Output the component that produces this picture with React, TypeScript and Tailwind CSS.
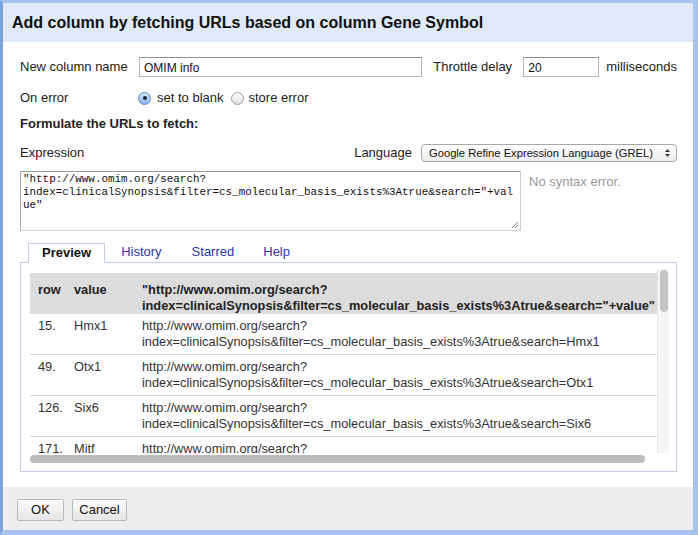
import React from "react";

const URL_TAIL = "index=clinicalSynopsis&filter=cs_molecular_basis_exists%3Atrue&search=";

function Radio({ checked, className = "" }: { checked: boolean; className?: string }) {
  return checked ? (
    <span className={"w-[13px] h-[13px] rounded-full border border-[#5a86c4] bg-gradient-to-b from-[#d6e7fc] to-[#8ab6ec] flex items-center justify-center shrink-0 " + className}>
      <span className="w-[4px] h-[4px] rounded-full bg-[#1d2a40]" />
    </span>
  ) : (
    <span className={"block w-[13px] h-[13px] rounded-full border border-[#a0a0a0] bg-gradient-to-b from-[#ffffff] to-[#dedede] shrink-0 " + className} />
  );
}

function Row({ n, v }: { n: string; v: string }) {
  return (
    <div className="flex items-start h-[41px] pt-[4px] border-b border-[#d6d6d6] text-[#333]">
      <div className="w-[36px] pl-[8px] shrink-0">{n}</div>
      <div className="w-[68px] pl-[8px] shrink-0">{v}</div>
      <div className="pl-[8px] whitespace-nowrap">
        <div>http://www.omim.org/search?</div>
        <div>{URL_TAIL + v}</div>
      </div>
    </div>
  );
}

export default function App() {
  return (
    <div className="w-[698px] h-[535px] border-l-[3px] border-l-[#7ea2d9] border-t-[3px] border-t-[#a9c4ec] border-r-[5px] border-r-[#a9c4ec] border-b-[5px] border-b-[#a9c4ec] font-['Liberation_Sans',Arial,sans-serif] text-[13px] text-[#222] overflow-hidden">
      <div className="flex flex-col h-full">
        <div className="h-[39px] shrink-0 bg-[#dfe9f8] flex items-center pl-[9px] text-[16px] font-bold text-[#111]">
          Add column by fetching URLs based on column Gene Symbol
        </div>

        <div className="flex-1 bg-white pl-[17px] pr-[16px] flex flex-col">
          {/* Row 1 */}
          <div className="mt-[15px] h-[20px] flex items-center">
            <div className="w-[119px] shrink-0">New column name</div>
            <div className="w-[284px] h-[20px] border border-[#b5b5b5] border-t-[#8f8f8f] flex items-center pl-[4px] pt-[1px] text-[12px] text-[#111]">
              OMIM info
            </div>
            <div className="ml-[11px] w-[90px] shrink-0">Throttle delay</div>
            <div className="w-[76px] h-[20px] border border-[#b5b5b5] border-t-[#8f8f8f] flex items-center pl-[4px] pt-[1px] text-[12px] text-[#111]">
              20
            </div>
            <div className="ml-[7px]">milliseconds</div>
          </div>

          {/* Row 2 */}
          <div className="mt-[11px] h-[20px] flex items-center">
            <div className="w-[118px] shrink-0">On error</div>
            <Radio checked />
            <span className="ml-[6px]">set to blank</span>
            <Radio checked={false} className="ml-[7px]" />
            <span className="ml-[5px]">store error</span>
          </div>

          {/* Row 3 */}
          <div className="mt-[8px] h-[16px] flex items-center font-bold">Formulate the URLs to fetch:</div>

          {/* Row 4 */}
          <div className="mt-[12px] h-[18px] flex items-center justify-between">
            <div>Expression</div>
            <div className="flex items-center">
              <span>Language</span>
              <div className="ml-[9px] w-[256px] h-[18px] rounded-[4px] border border-[#a8a8a8] bg-gradient-to-b from-[#ffffff] to-[#ededed] flex items-center pl-[7px] pr-[5px] text-[11.2px] text-[#111] justify-between">
                <span>Google Refine Expression Language (GREL)</span>
                <svg width="7" height="10" viewBox="0 0 7 10">
                  <path d="M3.5 1 L6 4 L1 4 Z" fill="#333" />
                  <path d="M3.5 9 L6 6 L1 6 Z" fill="#333" />
                </svg>
              </div>
            </div>
          </div>

          {/* Row 5 */}
          <div className="mt-[9px] flex items-start">
            <div className="relative w-[501px] h-[60px] border border-[#d0d0d0] border-t-[#9a9a9a] border-l-[#a8a8a8] pl-[2px] pt-[1px] font-['Liberation_Mono','Courier_New',monospace] text-[10.9px] leading-[13px] text-[#111] whitespace-pre overflow-hidden">
              <div>"http://www.omim.org/search?</div>
              <div>{URL_TAIL + '"+val'}</div>
              <div>ue"</div>
              <svg className="absolute right-[1px] bottom-[1px]" width="8" height="8" viewBox="0 0 8 8">
                <path d="M7 1 L1 7 M7 4 L4 7" stroke="#8a8a8a" strokeWidth="1" />
              </svg>
            </div>
            <div className="ml-[8px] mt-[1px] text-[#9a9a9a]">No syntax error.</div>
          </div>

          {/* Tabs */}
          <div className="mt-[11px] h-[20px] flex items-end pl-[8px] relative z-10">
            <div className="h-[20px] px-[13px] border border-[#c3cce4] border-b-0 bg-white font-bold text-[#111] flex items-center -mb-px pb-px">
              Preview
            </div>
            <div className="ml-[3px] h-[20px] px-[13px] flex items-center text-[#2b35b0]">History</div>
            <div className="ml-[4px] h-[20px] px-[13px] flex items-center text-[#2b35b0]">Starred</div>
            <div className="ml-[3px] h-[20px] px-[13px] flex items-center text-[#2b35b0]">Help</div>
          </div>

          {/* Panel */}
          <div className="h-[210px] border border-[#c3cce4] pt-[10px] pl-[9px] pr-[7px] flex items-start">
            <div className="w-[627px] shrink-0 flex flex-col">
              <div className="h-[180px] overflow-hidden text-[12.8px] leading-[16px]">
                <div className="flex items-start h-[41px] pt-[9px] bg-[#dcdcdc] font-bold text-[#222]">
                  <div className="w-[36px] pl-[8px] shrink-0">row</div>
                  <div className="w-[68px] pl-[8px] shrink-0">value</div>
                  <div className="pl-[8px] whitespace-nowrap">
                    <div>"http://www.omim.org/search?</div>
                    <div>{URL_TAIL + '"+value"'}</div>
                  </div>
                </div>
                <Row n="15." v="Hmx1" />
                <Row n="49." v="Otx1" />
                <Row n="126." v="Six6" />
                <Row n="171." v="Mitf" />
              </div>
              <div className="h-[11px] pt-[2px]">
                <div className="w-[615px] h-[8px] rounded-full bg-[#bdbdbd]" />
              </div>
            </div>
            <div className="w-[12px] h-[184px] -mt-[4px] bg-[#f5f5f5] border-l border-[#e6e6e6] pt-[1px] flex justify-center">
              <div className="w-[8px] h-[42px] rounded-full bg-[#c4c4c4]" />
            </div>
          </div>
        </div>

        <div className="h-[43px] shrink-0 bg-[#eeeeee] pl-[14px] pt-[12px] flex items-start gap-[8px]">
          <div className="w-[47px] h-[22px] border border-[#b9b9b9] rounded-[2px] bg-gradient-to-b from-[#fbfbfb] to-[#e6e6e6] flex items-center justify-center text-[13px] text-[#111]">
            OK
          </div>
          <div className="w-[55px] h-[22px] border border-[#b9b9b9] rounded-[2px] bg-gradient-to-b from-[#fbfbfb] to-[#e6e6e6] flex items-center justify-center text-[13px] text-[#111]">
            Cancel
          </div>
        </div>
      </div>
    </div>
  );
}
